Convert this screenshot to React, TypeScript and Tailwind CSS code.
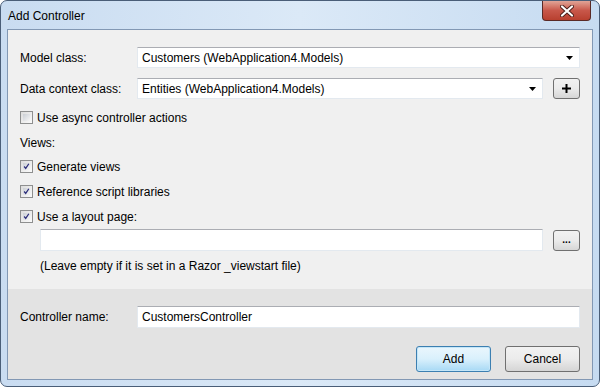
import React from 'react';

const font = { fontFamily: '"Liberation Sans", Arial, sans-serif' };

function Check({ checked }: { checked?: boolean }) {
  return (
    <div className="w-[13px] h-[13px] border border-[#8e8f8f] bg-gradient-to-br from-[#dcdcdc] to-[#fbfbfb] p-[2px] shrink-0">
      <div className="w-full h-full bg-gradient-to-br from-[#cbcfd5] to-[#f6f6f6] flex items-center justify-center">
        {checked && (
          <svg width="9" height="9" viewBox="0 0 9 9">
            <path d="M1.5 4.5 L3.5 7 L7.5 1" fill="none" stroke="#2b2d7a" strokeWidth="1.6" />
          </svg>
        )}
      </div>
    </div>
  );
}

function Arrow() {
  return (
    <svg width="7" height="4" viewBox="0 0 7 4" className="shrink-0">
      <path d="M0 0 H7 L3.5 4 Z" fill="#000" />
    </svg>
  );
}

function Combo({ value, className }: { value: string; className: string }) {
  return (
    <div className={`h-[21px] bg-white border border-[#e3e9ef] border-t-[#abadb3] flex items-center pl-[4px] pr-[6px] ${className}`}>
      <span className="flex-1 truncate">{value}</span>
      <Arrow />
    </div>
  );
}

function SmallButton({ children }: { children: React.ReactNode }) {
  return (
    <div className="w-[27px] h-[21px] rounded-[3px] border border-[#707070] bg-gradient-to-b from-[#f2f2f2] via-[#ebebeb] to-[#d6d6d6] flex items-center justify-center shrink-0">
      {children}
    </div>
  );
}

function CheckRow({ label, checked }: { label: string; checked?: boolean }) {
  return (
    <div className="flex items-center gap-[4px] h-[13px]">
      <Check checked={checked} />
      <span>{label}</span>
    </div>
  );
}

export default function App() {
  return (
    <div
      className="w-[600px] h-[387px] rounded-[7px] border border-[#4a5e78] bg-gradient-to-r from-[#c9dcf1] via-[#dbe9f7] to-[#c6dbf1] flex flex-col text-[12px] text-black overflow-hidden"
      style={font}
    >
      <div className="h-[28px] flex items-start justify-between shrink-0">
        <span className="pl-[7px] pt-[6px] text-[12px]">Add Controller</span>
        <div className="mr-[8px] w-[49px] h-[20px] rounded-b-[4px] border border-t-0 border-[#5a2a26] bg-gradient-to-b from-[#e0a497] via-[#c8574a] to-[#b8402f] flex items-center justify-center">
          <svg width="14" height="12" viewBox="0 0 14 12">
            <path d="M2 1.5 L12 10.5 M12 1.5 L2 10.5" stroke="#4b1e1a" strokeWidth="4" strokeLinecap="round" />
            <path d="M2 1.5 L12 10.5 M12 1.5 L2 10.5" stroke="#fff" strokeWidth="2.2" strokeLinecap="round" />
          </svg>
        </div>
      </div>

      <div className="mx-[6px] mb-[6px] flex-1 border border-[#8298b4] bg-[#f0f0f0] flex flex-col">
        <div className="px-[12px] pt-[17px] flex flex-col flex-1">
          <div className="flex items-center">
            <span className="w-[117px]">Model class:</span>
            <Combo value="Customers (WebApplication4.Models)" className="flex-1" />
          </div>
          <div className="flex items-center mt-[10px]">
            <span className="w-[117px]">Data context class:</span>
            <Combo value="Entities (WebApplication4.Models)" className="flex-1" />
            <div className="ml-[10px]">
              <SmallButton>
                <svg width="11" height="11" viewBox="0 0 11 11">
                  <path d="M5.5 1 V10 M1 5.5 H10" stroke="#000" strokeWidth="2" />
                </svg>
              </SmallButton>
            </div>
          </div>
          <div className="mt-[12px]">
            <CheckRow label="Use async controller actions" />
          </div>
          <span className="mt-[12px] leading-[14px]">Views:</span>
          <div className="mt-[10px] flex flex-col gap-[12px]">
            <CheckRow label="Generate views" checked />
            <CheckRow label="Reference script libraries" checked />
            <CheckRow label="Use a layout page:" checked />
          </div>
          <div className="flex items-center mt-[6px] pl-[20px]">
            <div className="flex-1 h-[22px] bg-white border border-[#e3e9ef] border-t-[#abadb3]" />
            <div className="ml-[10px]">
              <SmallButton>
                <span className="text-[10px] leading-none tracking-[0px] -mt-[1px] font-bold">...</span>
              </SmallButton>
            </div>
          </div>
          <span className="pl-[20px] mt-[6px]">(Leave empty if it is set in a Razor _viewstart file)</span>
        </div>

        <div className="h-[90px] bg-[#e3e3e3] px-[12px] pt-[17px] flex flex-col shrink-0">
          <div className="flex items-center">
            <span className="w-[117px]">Controller name:</span>
            <div className="flex-1 h-[22px] bg-white border border-[#e3e9ef] border-t-[#abadb3] flex items-center pl-[4px]">
              CustomersController
            </div>
          </div>
          <div className="flex justify-end gap-[14px] mt-[18px]">
            <div className="w-[75px] h-[26px] rounded-[3px] border border-[#3c7fb1] bg-gradient-to-b from-[#eaf6fd] via-[#d9f0fc] to-[#a7d9f5] flex items-center justify-center shadow-[inset_0_0_0_1px_#c4e6f8]">
              Add
            </div>
            <div className="w-[75px] h-[26px] rounded-[3px] border border-[#707070] bg-gradient-to-b from-[#f2f2f2] via-[#ebebeb] to-[#d5d5d5] flex items-center justify-center">
              Cancel
            </div>
          </div>
        </div>
      </div>
    </div>
  );
}
